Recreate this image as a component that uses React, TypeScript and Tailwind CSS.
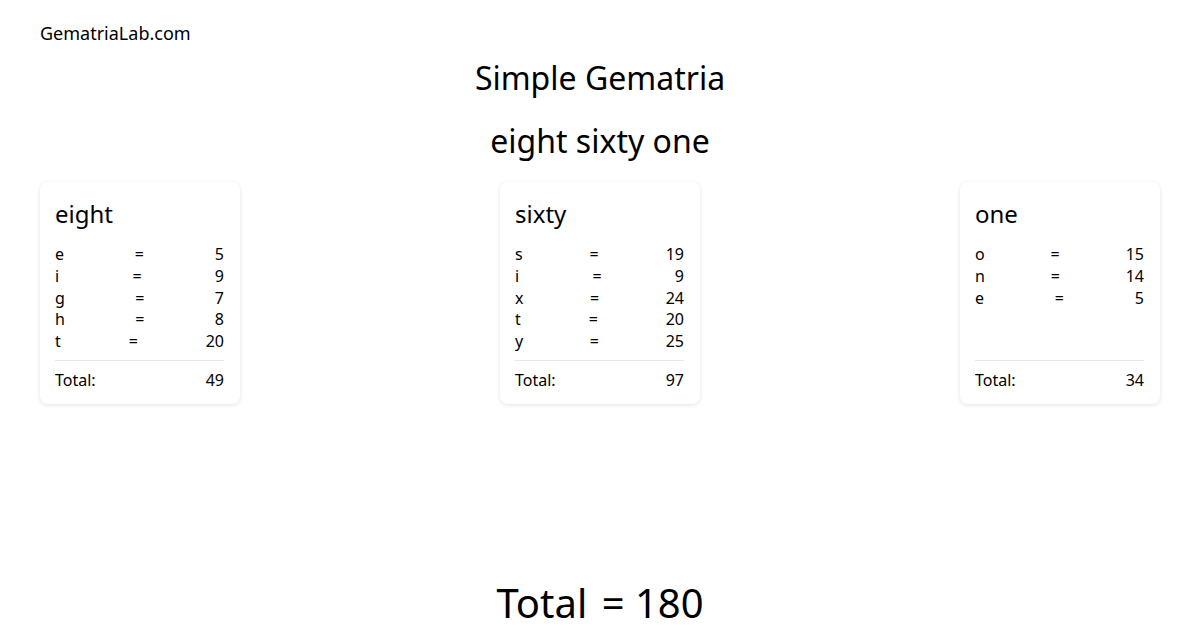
import React from 'react';

type Word = { word: string; letters: [string, number][] };

const words: Word[] = [
  { word: 'eight', letters: [['e', 5], ['i', 9], ['g', 7], ['h', 8], ['t', 20]] },
  { word: 'sixty', letters: [['s', 19], ['i', 9], ['x', 24], ['t', 20], ['y', 25]] },
  { word: 'one', letters: [['o', 15], ['n', 14], ['e', 5]] },
];

const WordCard: React.FC<{ item: Word }> = ({ item }) => {
  const total = item.letters.reduce((sum, [, v]) => sum + v, 0);
  return (
    <div className="w-[200px] bg-white rounded-lg shadow-[0_1px_4px_rgba(0,0,0,0.12)] pl-[15px] pr-[16px] pt-[17px] pb-[13px] flex flex-col">
      <h2 className="text-[24px] leading-[30px] mb-[15px]">{item.word}</h2>
      <div className="text-[16px] leading-[21.75px]">
        {item.letters.map(([letter, value], i) => (
          <div key={i} className="flex justify-between">
            <span>{letter}</span>
            <span>=</span>
            <span>{value}</span>
          </div>
        ))}
      </div>
      <div className="mt-auto pt-[7px]">
        <div className="border-t border-gray-200 pt-[8px] flex justify-between text-[16px] leading-[22px]">
          <span>Total:</span>
          <span>{total}</span>
        </div>
      </div>
    </div>
  );
};

export default function App() {
  const grand = words.reduce((s, w) => s + w.letters.reduce((a, [, v]) => a + v, 0), 0);
  return (
    <div className="h-[630px] bg-white text-black flex flex-col px-10 font-['Noto_Sans',sans-serif]">
      <div className="pt-[21px] text-[18px] leading-[24px]">GematriaLab.com</div>
      <h1 className="text-center text-[32px] leading-[40px] mt-[13px]">Simple Gematria</h1>
      <div className="text-center text-[32px] leading-[40px] mt-[23px]">
        {words.map(w => w.word).join(' ')}
      </div>
      <div className="flex justify-between items-stretch mt-[21px]">
        {words.map(w => (
          <WordCard key={w.word} item={w} />
        ))}
      </div>
      <div className="mt-auto pb-[2px] text-center text-[40px] leading-[50px]">
        Total <span className="ml-1">= {grand}</span>
      </div>
    </div>
  );
}
